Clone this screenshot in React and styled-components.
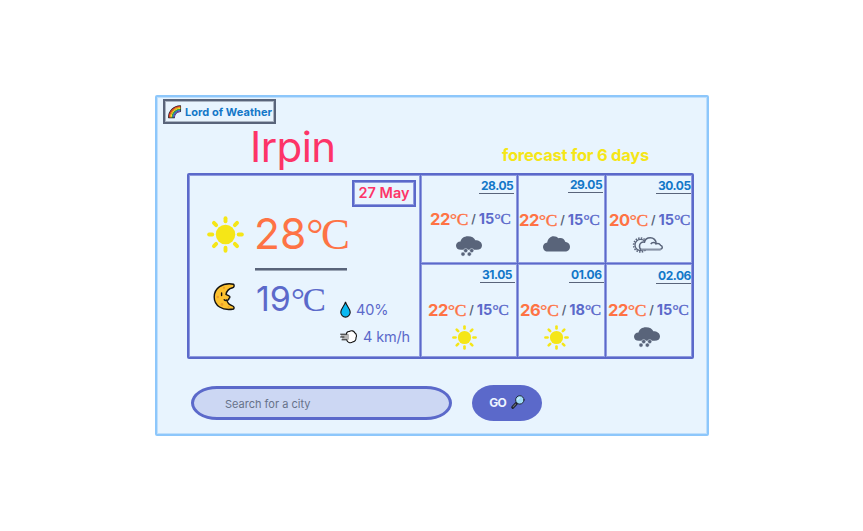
import React from "react";
import styled, { createGlobalStyle } from "styled-components";

const Global = createGlobalStyle`
  * { box-sizing: border-box; }
  body { margin: 0; background: #fff; font-family: Inter, "Liberation Sans", sans-serif; }
`;
const Page = styled.div`width: 863px; height: 531px; padding: 95px 0 0 155px; overflow: hidden;`;
const Card = styled.main`
  width: 554px; height: 341px; border: 2px solid #8dc7fb; background: #e8f4fe;
  box-shadow: inset 0 0 0 1px #bfdffc; padding: 2px 0 0 6px; border-radius: 2px;
`;
const Brand = styled.div`
  width: 113px; height: 25px; border: 2px solid #59647a; box-shadow: inset 0 0 0 1px #a9b3c1;
  display: flex; align-items: center; gap: 3px; padding-left: 3px;
  color: #1277c8; font-weight: 700; font-size: 11px; letter-spacing: 0.05px; white-space: nowrap;
`;
const Heads = styled.div`display: flex; height: 49px;`;
const City = styled.h1`
  margin: -2px 0 0 87px; width: 252px; font-weight: 400; font-size: 42px; line-height: 50px;
  color: #fd3468; letter-spacing: -0.6px;
`;
const Caption = styled.h2`
  margin: 21px 0 0; font-size: 16.5px; line-height: 20px; font-weight: 700; color: #f5e617;
  letter-spacing: -0.24px; white-space: nowrap;
`;
const Panel = styled.section`
  margin-left: 24px; width: 507px; height: 186px; background: #5b69ca; padding: 3px; border-radius: 2px;
  display: grid; gap: 3px; grid-template-columns: 229px 94px 85px 84px; grid-template-rows: 86px 91px;
`;
const Today = styled.div`
  grid-row: 1 / 3; background: #e8f4fe; padding-top: 4px; box-shadow: 0 0 0 1px #8f9bdf;
`;
const DateBox = styled.div`
  margin-left: 162px; width: 64px; height: 27px; border: 2px solid #5b69ca; box-shadow: inset 0 0 0 1px #8f9bdf;
  color: #fd3468; font-size: 14.5px; font-weight: 600; line-height: 22px; letter-spacing: 0; text-align: center; white-space: nowrap;
`;
const Line = styled.div`
  display: flex; align-items: flex-start; height: ${p => p.$h}px; padding-left: ${p => p.$x}px; gap: ${p => p.$gap}px;
`;
const Big = styled.div`
  margin-top: ${p => p.$top}px; font-size: ${p => p.$size}px; line-height: 50px; height: 50px;
  color: ${p => p.$color}; white-space: nowrap; letter-spacing: ${p => p.$ls}px;
`;
const DegText = styled.span`
  font-family: "Liberation Serif", serif; font-weight: 400; line-height: 1;
  letter-spacing: ${p => (p.$bold ? "-0.01em" : "-0.06em")};
  font-size: ${p => (p.$bold ? "1.06em" : "1.02em")};
  -webkit-text-stroke: ${p => (p.$bold ? "0.4px" : "0")} currentColor;
`;
const Deg = ({ bold }) => <DegText $bold={bold}>°C</DegText>;
const Rule = styled.div`
  margin-left: 65px; width: 92px; height: 3px; background: linear-gradient(#59647a 2px, #9aa5b5 2px);
`;
const Detail = styled.div`
  display: flex; align-items: center; gap: ${p => p.$gap}px; margin-left: 150px; height: 27px;
  color: #5b69ca; font-size: 14.5px; letter-spacing: -0.15px; white-space: nowrap;
`;
const Cell = styled.div`
  background: #e8f4fe; box-shadow: 0 0 0 1px #8f9bdf; display: flex; flex-direction: column;
`;
const Day = styled.div`
  align-self: flex-end; margin: ${p => p.$top}px ${p => p.$right}px 0 0; width: 35px; height: 14px;
  border-bottom: 1px solid #59647a; color: #1277c8; font-size: 12px; font-weight: 700; line-height: 12px;
  padding-left: 2px; letter-spacing: -0.45px; white-space: nowrap;
`;
const Temps = styled.div`
  display: flex; align-items: center; gap: 3px; white-space: nowrap; height: 20px; line-height: 20px;
  margin: ${p => p.$top}px 0 0 ${p => p.$x}px; color: #59647a; font-size: 12px; font-weight: 600;
`;
const Hi = styled.span`color: #fe7345; font-size: 16.5px; font-weight: 700; letter-spacing: -0.4px;`;
const Lo = styled.span`color: #5b69ca; font-size: 14.5px; font-weight: 700;`;
const Glyph = styled.svg`display: block; flex: none; overflow: visible; margin: ${p => p.$m || "0"};`;
const Form = styled.form`display: flex; margin: 27px 0 0 28px; gap: 20px;`;
const Search = styled.input`
  width: 261px; height: 34px; margin-top: 0; border: 3px solid #5b69ca; border-radius: 26px / 17px; background: #ccd7f3;
  padding: 2px 0 0 31px; font: 400 11px Inter, sans-serif; color: #67728a; outline: 0;
  &::placeholder { color: #67728a; opacity: 1; }
`;
const Go = styled.button`
  width: 70px; height: 36px; border: 0; border-radius: 22px / 18px; background: #5b69ca; color: #edf4ff;
  font: 700 12px Inter, sans-serif; letter-spacing: -0.8px; display: flex; align-items: center; justify-content: center;
  gap: 5px; padding: 0 0 2px; margin-top: -1px;
`;

const Sun = ({ size, m }) => (
  <Glyph $m={m} width={size} height={size} viewBox="-19 -19 38 38">
    <circle r="10" fill="#f5e617" />
    {[0, 45, 90, 135, 180, 225, 270, 315].map(a => (
      <path key={a} d="M0-13.6V-16.8" transform={`rotate(${a})`} stroke="#f5e617" strokeWidth="4" strokeLinecap="round" />
    ))}
  </Glyph>
);
const Snow = ({ m }) => (
  <Glyph $m={m} width="26" height="20" viewBox="0 0 26 20" fill="#59647a">
    <path d="M5 13.8C1.8 13.8 0 12 0 9.7C0 7.3 1.8 5.7 4.5 5.6C5 2.3 8 .2 12 .2C15.6 .2 18.4 1.8 19.4 4.3C23 4.3 26 6.3 26 9.4C26 12.2 24 13.8 20.5 13.8Z" />
    <g stroke="#e8f4fe" strokeWidth=".5">
      <circle cx="9.7" cy="14.6" r="2.1" /><circle cx="15.7" cy="14.6" r="2.1" />
      <circle cx="7" cy="18.1" r="2.1" /><circle cx="13.3" cy="18.1" r="2.1" />
    </g>
  </Glyph>
);
const Cloud = ({ m }) => (
  <Glyph $m={m} width="27" height="16" viewBox="0 0 27 16" fill="#59647a">
    <path d="M4.6 15.6C1.8 15.6 0 13.4 0 10.8C0 8.3 2 6.5 4.2 6.4C5 2.7 7.5.3 10.5.3C13 .3 14.2 1 15.5 2.3C18.5 1.2 21.5 2.7 22.2 5.7C25.4 6.2 27 8.3 27 10.8C27 13.5 25 15.6 22 15.6Z" />
  </Glyph>
);
const PartCloud = ({ m }) => (
  <Glyph $m={m} width="30" height="16" viewBox="0 0 30 16" fill="none" stroke="#59647a" strokeWidth="1.5">
    <circle cx="7.6" cy="8" r="5.6" strokeWidth="1.3" />
    <circle cx="7.6" cy="8" r="7" strokeWidth="1.6" strokeDasharray="1.5 1.25" />
    <path d="M8.5 12.4H26.8C30 12.2 30 8.9 27.5 8.2C26.5 6.6 24.8 6.3 23.2 6.9C23.2 3 20.5.8 17.3.8C14.3.8 12 2.6 11.5 5.2C8.5 4.6 6.5 6.6 6.5 9C6.5 11 7.2 12.4 8.5 12.4Z" fill="#e8f4fe" />
    <path d="M17.8 7.2C19 5 22 4.9 23.2 6.9" />
    <path d="M8 12.6H28" stroke="#8994a6" strokeWidth="1.6" />
  </Glyph>
);
const Rainbow = () => (
  <Glyph width="14" height="14" viewBox="0 0 14 14" fill="none">
    <path d="M.7 12.6C.7 6 6 1 12.4 1V6.3C9 6.5 6.4 9 6.2 12.6Z" fill="#222" stroke="#222" strokeWidth="1.3" strokeLinejoin="round" />
    {["#e8392f", "#f39a20", "#f8e52e", "#36ad4a", "#2f8cd6", "#7b4fb5"].map((c, i) => {
      const r = 11.2 - i * 0.98;
      return <path key={c} d={`M${12.4 - r} 12.6A${r} ${r} 0 0 1 12.4 ${12.6 - r}`} stroke={c} strokeWidth="1.05" />;
    })}
  </Glyph>
);
const Moon = ({ m }) => (
  <Glyph $m={m} width="22" height="28" viewBox="0 0 22 28">
    <path d="M20.6 1.2C9-.8 1.2 5.5 1.2 14C1.2 22.5 9 28.2 20.6 26C21.6 24.8 21 23.4 19.4 22.9C16.5 22 14.5 20.2 13.8 17.2C15.3 17.3 16 16.6 15.9 15.3C17.2 14.8 17.2 13.2 16 12.8L13 11.4C13.6 8 16 5.7 19.6 4.8C21.2 4.2 21.6 2.4 20.6 1.2Z" fill="#fcc12f" stroke="#111" strokeWidth="1.4" strokeLinejoin="round" />
    <path d="M8.6 10V12.5M11.2 16.8C12 17.6 13 17.6 13.8 17.2" stroke="#111" strokeWidth="1.4" fill="none" strokeLinecap="round" />
    <g fill="#ee9d27"><circle cx="11" cy="4.8" r="1.1" /><circle cx="4.8" cy="14" r="1.2" /><circle cx="9" cy="21.5" r="1.4" /><circle cx="15.5" cy="23.8" r=".9" /></g>
  </Glyph>
);
const Drop = () => (
  <Glyph width="11" height="17" viewBox="0 0 11 17">
    <path d="M5.5 1C4.5 5 .8 7.5.8 11.3A4.7 4.8 0 0 0 10.2 11.3C10.2 7.5 6.5 5 5.5 1Z" fill="#08b9f3" stroke="#111" strokeWidth="1.1" />
  </Glyph>
);
const Wind = () => (
  <Glyph width="17" height="14" viewBox="0 0 17 14" strokeLinecap="round" strokeLinejoin="round">
    <path d="M6.4 4.2C6.4 2.3 8 1.2 9.3 1.5C11.3.1 14 .8 14.7 2.8C16.6 3.8 16.9 6.2 16 7.6C16.3 10 14.6 11.8 12.8 11.9C10.4 13.6 7 12.4 6.8 10" fill="#fff" stroke="#111" strokeWidth="1.1" />
    <path d="M1 4.2H9V9.6H2V7H1Z" fill="#b5b5b5" />
    <path d="M.6 4.2H7M.6 7H4M2 9.8H7" stroke="#222" strokeWidth="1" />
  </Glyph>
);
const Lens = () => (
  <Glyph width="14" height="14" viewBox="0 0 14 14" strokeLinecap="round">
    <path d="M1.8 12.3L5.6 8.2" stroke="#151820" strokeWidth="3" /><path d="M2 12L4.8 9" stroke="#666c75" strokeWidth="1.1" />
    <circle cx="8.8" cy="4.9" r="4.2" fill="#9edcf8" stroke="#252a38" strokeWidth="1" /><path d="M6.6 4.8A2.2 2.2 0 0 1 8.8 2.7" stroke="#e4f8ff" strokeWidth="1" fill="none" />
  </Glyph>
);

const days = [
  { d: "28.05", hi: 22, lo: 15, top: 4, right: 2, tTop: 15, x: 8, icon: <Snow m="7px 0 0 34px" /> },
  { d: "29.05", hi: 22, lo: 15, top: 3, right: 1, tTop: 17, x: 0, icon: <Cloud m="6px 0 0 24px" /> },
  { d: "30.05", hi: 20, lo: 15, top: 4, right: 0, tTop: 16, x: 2, icon: <PartCloud m="7px 0 0 26px" /> },
  { d: "31.05", hi: 22, lo: 15, top: 4, right: 1, tTop: 17, x: 6, icon: <Sun size={25} m="5px 0 0 30px" /> },
  { d: "01.06", hi: 26, lo: 18, top: 4, right: 0, tTop: 17, x: 1, icon: <Sun size={25} m="5px 0 0 25px" /> },
  { d: "02.06", hi: 22, lo: 15, top: 5, right: 0, tTop: 16, x: 1, icon: <Snow m="7px 0 0 27px" /> },
];

export default function App() {
  return (
    <Page>
      <Global />
      <Card>
        <Brand><Rainbow />Lord of Weather</Brand>
        <Heads><City>Irpin</City><Caption>forecast for 6 days</Caption></Heads>
        <Panel>
          <Today>
            <DateBox>27 May</DateBox>
            <Line $h={61} $x={17} $gap={10}>
              <Sun size={37} m="9px 0 0" /><Big $top={2} $size={42.5} $color="#fe7345" $ls={0}>28<Deg /></Big>
            </Line>
            <Rule />
            <Line $h={25} $x={23} $gap={21}>
              <Moon m="12px 0 0" /><Big $top={3} $size={34} $color="#5b69ca" $ls={0}>19<Deg /></Big>
            </Line>
            <Detail $gap={5}><Drop />40%</Detail>
            <Detail $gap={6}><Wind />4 km/h</Detail>
          </Today>
          {days.map(f => (
            <Cell key={f.d}>
              <Day $top={f.top} $right={f.right}>{f.d}</Day>
              <Temps $top={f.tTop} $x={f.x}>
                <Hi>{f.hi}<Deg bold /></Hi>/<Lo>{f.lo}<Deg bold /></Lo>
              </Temps>
              {f.icon}
            </Cell>
          ))}
        </Panel>
        <Form onSubmit={e => e.preventDefault()}>
          <Search placeholder="Search for a city" />
          <Go>GO <Lens /></Go>
        </Form>
      </Card>
    </Page>
  );
}
